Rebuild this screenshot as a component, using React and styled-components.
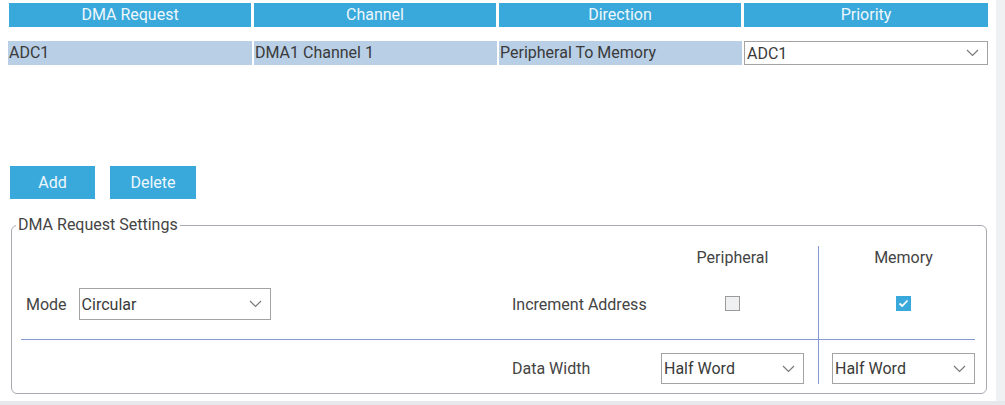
import React, { useState } from "react";
import styled, { createGlobalStyle } from "styled-components";

const GlobalStyle = createGlobalStyle`
	html, body {
		margin: 0;
		padding: 0;
		background: #ffffff;
	}
	body {
		font-family: Roboto, "Liberation Sans", Arial, sans-serif;
		font-size: 16px;
		color: #444;
	}
`;

const blue = "#39a9db";
const lineBlue = "#8499cf";

const Page = styled.div`
	width: 1005px;
	height: 405px;
	display: flex;
	flex-direction: column;
	overflow: hidden;
`;

const Body = styled.div`
	flex: 1;
	display: flex;
`;

const Main = styled.div`
	width: 996px;
	display: flex;
	flex-direction: column;
`;

const Gutter = styled.div`
	flex: 1;
	background: #f0f1f3;
`;

const BottomStrip = styled.div`
	height: 4px;
	background: #e6e9ec;
`;

const TableArea = styled.div`
	height: 166px;
	padding: 3px 8px 0 8px;
	box-sizing: border-box;
	display: flex;
	flex-direction: column;
	gap: 14px;
`;

const HeaderRow = styled.div`
	display: grid;
	grid-template-columns: 242px 242px 242px 244px;
	column-gap: 3px;
	margin-left: 1px;
`;

const HeaderCell = styled.div`
	height: 24px;
	line-height: 24px;
	background: ${blue};
	color: #eef7fc;
	text-align: center;
	font-size: 16px;
`;

const DataRow = styled.div`
	display: grid;
	grid-template-columns: 244px 243px 243px 244px;
	column-gap: 2px;
	height: 24px;
`;

const DataCell = styled.div`
	background: #b9cfe6;
	line-height: 24px;
	padding-left: 1px;
	font-size: 16px;
	color: #3a3a3a;
	white-space: nowrap;
`;

const SelectBox = styled.div`
	display: flex;
	align-items: center;
	justify-content: space-between;
	box-sizing: border-box;
	width: ${(p) => p.$w || "100%"};
	height: ${(p) => p.$h || 24}px;
	border: 1px solid #a3a3a3;
	background: #fff;
	padding: 0 8px 0 2px;
	font-size: 16px;
	color: #3a3a3a;
	cursor: pointer;
`;

const ButtonBar = styled.div`
	display: flex;
	gap: 15px;
	padding-left: 10px;
	height: 33px;
`;

const Button = styled.button`
	width: ${(p) => p.$w}px;
	height: 33px;
	border: none;
	background: ${blue};
	color: #eef7fc;
	font-family: inherit;
	font-size: 16px;
	cursor: pointer;
	padding: 0;
`;

const Settings = styled.fieldset`
	margin: 17px 9px 0 11px;
	padding: 0 11px 9px 9px;
	border: 1px solid #a7abb0;
	border-radius: 6px;
	box-sizing: border-box;
`;

const Legend = styled.legend`
	padding: 0 2px;
	margin-left: -5px;
	line-height: 18px;
	font-size: 16px;
	color: #444;
`;

const SettingsGrid = styled.div`
	margin-top: 12px;
	display: grid;
	grid-template-columns: 491px 149px 143px 28px 143px;
	grid-template-rows: 24px 68px 2px 44px;
`;

const ColTitle = styled.div`
	grid-row: 1;
	grid-column: ${(p) => p.$col};
	text-align: center;
	line-height: 24px;
	color: #444;
`;

const Field = styled.div`
	grid-row: ${(p) => p.$row};
	grid-column: ${(p) => p.$col};
	display: flex;
	align-items: ${(p) => p.$align || "center"};
	justify-content: ${(p) => p.$justify || "flex-start"};
	gap: 12px;
	padding-left: ${(p) => p.$pl || 0}px;
	color: #444;
`;

const FieldLabel = styled.span`
	line-height: 30px;
`;

const HLine = styled.div`
	grid-row: 3;
	grid-column: 1 / 6;
	align-self: center;
	height: 1px;
	background: ${lineBlue};
`;

const VLine = styled.div`
	grid-row: 1 / 5;
	grid-column: 4;
	justify-self: center;
	width: 1px;
	background: ${lineBlue};
`;

const Check = styled.span`
	width: 15px;
	height: 15px;
	box-sizing: border-box;
	display: inline-flex;
	align-items: center;
	justify-content: center;
	border: 1px solid ${(p) => (p.$on ? blue : "#9a9a9a")};
	background: ${(p) => (p.$on ? blue : "#eef0f2")};
	cursor: pointer;
	margin-top: -1px;
`;

const Chevron = () => (
	<svg width="13" height="8" viewBox="0 0 13 8">
		<polyline
			points="1,1 6.5,6.5 12,1"
			fill="none"
			stroke="#7a7a7a"
			strokeWidth="1.2"
		/>
	</svg>
);

const Select = ({ value, w, h }) => (
	<SelectBox $w={w} $h={h}>
		<span>{value}</span>
		<Chevron />
	</SelectBox>
);

const Checkbox = ({ checked, onToggle }) => (
	<Check $on={checked} onClick={onToggle}>
		{checked && (
			<svg width="11" height="9" viewBox="0 0 11 9">
				<polyline
					points="1.5,4.5 4.2,7 9.5,1.5"
					fill="none"
					stroke="#fff"
					strokeWidth="1.8"
				/>
			</svg>
		)}
	</Check>
);

const App = () => {
	const [periphInc, setPeriphInc] = useState(false);
	const [memInc, setMemInc] = useState(true);

	return (
		<Page>
			<GlobalStyle />
			<Body>
				<Main>
					<TableArea>
						<HeaderRow>
							<HeaderCell>DMA Request</HeaderCell>
							<HeaderCell>Channel</HeaderCell>
							<HeaderCell>Direction</HeaderCell>
							<HeaderCell>Priority</HeaderCell>
						</HeaderRow>
						<DataRow>
							<DataCell>ADC1</DataCell>
							<DataCell>DMA1 Channel 1</DataCell>
							<DataCell>Peripheral To Memory</DataCell>
							<Select value="ADC1" h={24} />
						</DataRow>
					</TableArea>

					<ButtonBar>
						<Button $w={85}>Add</Button>
						<Button $w={86}>Delete</Button>
					</ButtonBar>

					<Settings>
						<Legend>DMA Request Settings</Legend>
						<SettingsGrid>
							<ColTitle $col={3}>Peripheral</ColTitle>
							<ColTitle $col={5}>Memory</ColTitle>

							<Field $row={2} $col={1} $pl={5}>
								Mode
								<Select value="Circular" w="192px" h={32} />
							</Field>
							<Field $row={2} $col={2}>
								Increment Address
							</Field>
							<Field $row={2} $col={3} $justify="center">
								<Checkbox
									checked={periphInc}
									onToggle={() => setPeriphInc(!periphInc)}
								/>
							</Field>
							<Field $row={2} $col={5} $justify="center">
								<Checkbox
									checked={memInc}
									onToggle={() => setMemInc(!memInc)}
								/>
							</Field>

							<HLine />
							<VLine />

							<Field $row={4} $col={2} $align="flex-end">
								<FieldLabel>Data Width</FieldLabel>
							</Field>
							<Field $row={4} $col={3} $align="flex-end">
								<Select value="Half Word" h={31} />
							</Field>
							<Field $row={4} $col={5} $align="flex-end">
								<Select value="Half Word" h={31} />
							</Field>
						</SettingsGrid>
					</Settings>
				</Main>
				<Gutter />
			</Body>
			<BottomStrip />
		</Page>
	);
};

export default App;
